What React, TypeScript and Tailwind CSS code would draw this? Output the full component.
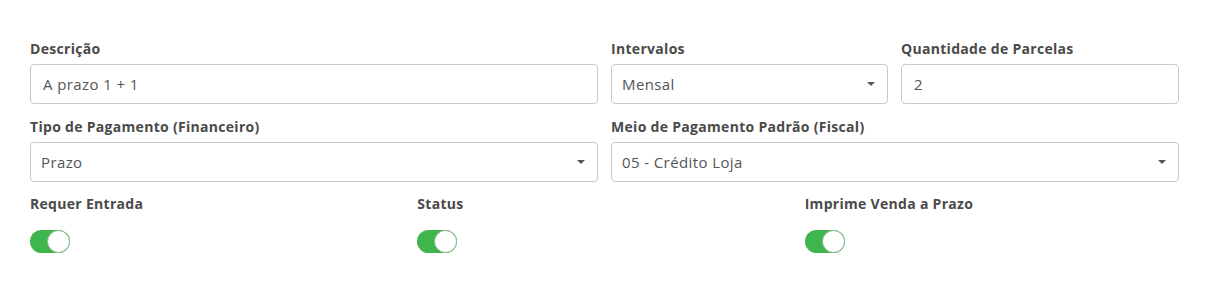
import React from 'react';

const Label: React.FC<{ children: React.ReactNode }> = ({ children }) => (
  <label className="block text-[14px] font-bold tracking-[0.3px] text-[#4a4a4a] leading-[18px] mb-[6px]">{children}</label>
);

const TextInput: React.FC<{ value: string }> = ({ value }) => (
  <div className="h-[40px] rounded-[4px] border border-[#c8c8c8] bg-white px-[12px] flex items-center text-[15px] tracking-[0.4px] text-[#555]">
    {value}
  </div>
);

const SelectInput: React.FC<{ value: string }> = ({ value }) => (
  <div className="h-[40px] rounded-[4px] border border-[#c8c8c8] bg-white pl-[10px] pr-[12px] flex items-center justify-between text-[15px] tracking-[0.4px] text-[#555]">
    <span>{value}</span>
    <span className="w-0 h-0 border-l-[4px] border-r-[4px] border-t-[4px] border-l-transparent border-r-transparent border-t-[#555]" />
  </div>
);

const Toggle: React.FC = () => (
  <div className="relative w-[40px] h-[23px] rounded-full bg-[#3fb54e]">
    <div className="absolute right-0 top-0 w-[23px] h-[23px] rounded-full bg-white border border-[#8fb88f]" />
  </div>
);

export default function App() {
  return (
    <div className="w-[1206px] h-[292px] bg-white pl-[30px] pr-[27px] pt-[40px]" style={{ fontFamily: '"Open Sans", sans-serif' }}>
      <div className="grid grid-cols-[568px_277px_278px] gap-x-[13px]">
        <div>
          <Label>Descrição</Label>
          <TextInput value="A prazo 1 + 1" />
        </div>
        <div>
          <Label>Intervalos</Label>
          <SelectInput value="Mensal" />
        </div>
        <div>
          <Label>Quantidade de Parcelas</Label>
          <TextInput value="2" />
        </div>
      </div>
      <div className="grid grid-cols-[568px_568px] gap-x-[13px] mt-[14px]">
        <div>
          <Label>Tipo de Pagamento (Financeiro)</Label>
          <SelectInput value="Prazo" />
        </div>
        <div>
          <Label>Meio de Pagamento Padrão (Fiscal)</Label>
          <SelectInput value="05 - Crédito Loja" />
        </div>
      </div>
      <div className="grid grid-cols-3 gap-x-[13px] mt-[13px]">
        {['Requer Entrada', 'Status', 'Imprime Venda a Prazo'].map((t) => (
          <div key={t}>
            <Label>{t}</Label>
            <div className="mt-[17px]">
              <Toggle />
            </div>
          </div>
        ))}
      </div>
    </div>
  );
}
